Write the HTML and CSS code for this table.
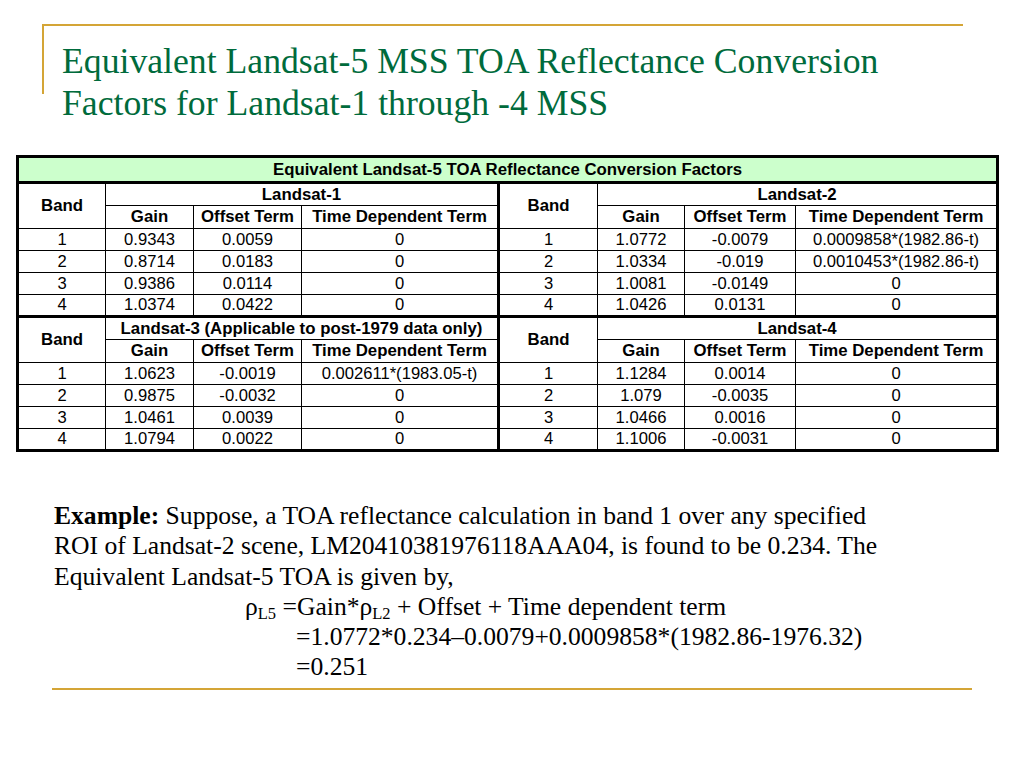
FILE: index.html
```html
<!DOCTYPE html>
<html>
<head>
<meta charset="utf-8">
<link rel="stylesheet" href="styles.css">
</head>
<body>
<div class="slide">
  <header class="head">
    <h1 class="title">Equivalent Landsat-5 MSS TOA Reflectance Conversion<br>Factors for Landsat-1 through -4 MSS</h1>
  </header>

  <table class="factors">
    <colgroup>
      <col class="c-band"><col class="c-gain"><col class="c-off"><col class="c-tdt">
      <col class="c-band2"><col class="c-gain2"><col class="c-off2"><col class="c-tdt2">
    </colgroup>
    <tr class="r-title"><th colspan="8" class="main">Equivalent Landsat-5 TOA Reflectance Conversion Factors</th></tr>
    <tr class="r-sat"><th rowspan="2" class="band">Band</th><th colspan="3">Landsat-1</th><th rowspan="2" class="band split">Band</th><th colspan="3">Landsat-2</th></tr>
    <tr class="r-sub"><th>Gain</th><th>Offset Term</th><th>Time Dependent Term</th><th>Gain</th><th>Offset Term</th><th>Time Dependent Term</th></tr>
    <tr><td>1</td><td>0.9343</td><td>0.0059</td><td>0</td><td class="split">1</td><td>1.0772</td><td>-0.0079</td><td>0.0009858*(1982.86-t)</td></tr>
    <tr><td>2</td><td>0.8714</td><td>0.0183</td><td>0</td><td class="split">2</td><td>1.0334</td><td>-0.019</td><td>0.0010453*(1982.86-t)</td></tr>
    <tr><td>3</td><td>0.9386</td><td>0.0114</td><td>0</td><td class="split">3</td><td>1.0081</td><td>-0.0149</td><td>0</td></tr>
    <tr class="r-last"><td>4</td><td>1.0374</td><td>0.0422</td><td>0</td><td class="split">4</td><td>1.0426</td><td>0.0131</td><td>0</td></tr>
    <tr class="r-sat r-sec"><th rowspan="2" class="band">Band</th><th colspan="3">Landsat-3 (Applicable to post-1979 data only)</th><th rowspan="2" class="band split">Band</th><th colspan="3">Landsat-4</th></tr>
    <tr class="r-sub"><th>Gain</th><th>Offset Term</th><th>Time Dependent Term</th><th>Gain</th><th>Offset Term</th><th>Time Dependent Term</th></tr>
    <tr><td>1</td><td>1.0623</td><td>-0.0019</td><td>0.002611*(1983.05-t)</td><td class="split">1</td><td>1.1284</td><td>0.0014</td><td>0</td></tr>
    <tr><td>2</td><td>0.9875</td><td>-0.0032</td><td>0</td><td class="split">2</td><td>1.079</td><td>-0.0035</td><td>0</td></tr>
    <tr><td>3</td><td>1.0461</td><td>0.0039</td><td>0</td><td class="split">3</td><td>1.0466</td><td>0.0016</td><td>0</td></tr>
    <tr><td>4</td><td>1.0794</td><td>0.0022</td><td>0</td><td class="split">4</td><td>1.1006</td><td>-0.0031</td><td>0</td></tr>
  </table>

  <div class="example">
    <p class="line"><b>Example:</b> Suppose, a TOA reflectance calculation in band 1 over any specified</p>
    <p class="line">ROI of Landsat-2 scene, LM20410381976118AAA04, is found to be 0.234. The</p>
    <p class="line">Equivalent Landsat-5 TOA is given by,</p>
    <p class="line f1">ρ<sub>L5</sub> =Gain*ρ<sub>L2</sub> + Offset + Time dependent term</p>
    <p class="line f2">=1.0772*0.234–0.0079+0.0009858*(1982.86-1976.32)</p>
    <p class="line f2">=0.251</p>
  </div>
  <div class="rule"></div>
</div>
</body>
</html>
```

FILE: styles.css
```css
html, body {
  margin: 0;
  padding: 0;
  background: #ffffff;
}
.slide {
  width: 1024px;
  height: 768px;
  overflow: hidden;
  padding-top: 24px;
  box-sizing: border-box;
}
.head {
  position: relative;
  margin-left: 42px;
  width: 921px;
  border-top: 2px solid #d4a536;
  height: 108px;
}
.head::before {
  content: "";
  position: absolute;
  left: 0;
  top: 0;
  width: 2px;
  height: 68px;
  background: #d4a536;
}
.title {
  margin: 0;
  padding: 14px 0 0 20px;
  font-family: "Liberation Serif", "Times New Roman", serif;
  font-weight: normal;
  font-size: 35.7px;
  line-height: 42px;
  color: #006b3c;
}
.factors {
  margin: 21px 0 0 16px;
  width: 983px;
  table-layout: fixed;
  border-collapse: collapse;
  border: 3px solid #000;
  font-family: "Liberation Sans", Arial, sans-serif;
  font-size: 16.6px;
  color: #000;
}
.c-band { width: 88px; }
.c-gain { width: 88px; }
.c-off { width: 108px; }
.c-tdt { width: 197px; }
.c-band2 { width: 99px; }
.c-gain2 { width: 87px; }
.c-off2 { width: 111px; }
.c-tdt2 { width: 202px; }
.factors th, .factors td {
  border: 1px solid #000;
  padding: 0;
  text-align: center;
  line-height: 18px;
  white-space: nowrap;
}
.factors th {
  font-weight: bold;
  font-size: 16.8px;
}
.factors tr { height: 22px; }
.factors .r-title { height: 26px; }
.factors .r-title th {
  background: #ccffcc;
  border-bottom: 3px solid #000;
}
.factors .r-sat { height: 23px; }
.factors .r-sub { height: 23px; }
.factors .r-sec th { border-top: 3px solid #000; }
.factors .split { border-left: 3px solid #000; }
.example {
  margin: 49px 0 0 54px;
  font-family: "Liberation Serif", "Times New Roman", serif;
  font-size: 25.6px;
  color: #000;
}
.line {
  margin: 0;
  line-height: 30.3px;
  white-space: nowrap;
}
.line sub {
  font-size: 16.5px;
  line-height: 0;
  vertical-align: -4px;
}
.f1 { padding-left: 191px; }
.f2 { padding-left: 242px; }
.rule {
  margin: 5px 0 0 52px;
  width: 920px;
  height: 2px;
  background: #d4a536;
}
```
